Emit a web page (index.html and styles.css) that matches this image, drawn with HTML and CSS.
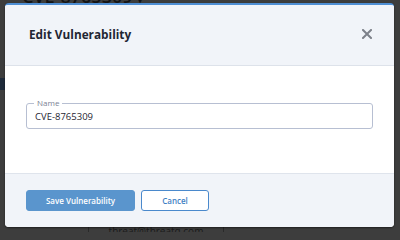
FILE: index.html
```html
<!DOCTYPE html>
<html>
<head>
<meta charset="utf-8">
<link rel="stylesheet" href="styles.css">
</head>
<body>
<div class="page">
  <div class="page-top">CVE-8765309 <span class="caret">▾</span></div>
  <div class="page-side">
    <div class="side-block"></div>
  </div>
  <div class="page-bottom">
    <span class="email">threat@threatq.com</span>
  </div>
</div>
<div class="modal">
  <div class="modal-header">
    <h2 class="modal-title">Edit Vulnerability</h2>
    <button class="close" aria-label="Close">
      <svg width="10" height="10" viewBox="0 0 10 10"><path d="M1 1L9 9M9 1L1 9" stroke="#7d818a" stroke-width="2" stroke-linecap="square"/></svg>
    </button>
  </div>
  <div class="modal-body">
    <div class="field">
      <span class="field-label">Name</span>
      <div class="field-value">CVE-8765309</div>
    </div>
  </div>
  <div class="modal-footer">
    <button class="btn btn-primary">Save Vulnerability</button>
    <button class="btn btn-outline">Cancel</button>
  </div>
</div>
</body>
</html>
```

FILE: styles.css
```css
html, body {
  margin: 0;
  padding: 0;
}
body {
  width: 400px;
  height: 232px;
  overflow: hidden;
  background: #3d3d3d;
  font-family: "Open Sans", "Noto Sans", sans-serif;
  position: relative;
}
.page {
  height: 232px;
  display: flex;
  flex-direction: column;
}
.page-top {
  margin-top: -11px;
  margin-left: 22px;
  font-size: 18px;
  font-weight: 600;
  color: #141414;
  line-height: 14px;
}
.caret {
  font-size: 12px;
}
.page-side {
  flex: 1;
}
.side-block {
  margin-top: 72px;
  width: 5px;
  height: 12px;
  background: #1e2a3a;
}
.page-bottom {
  height: 6px;
  margin-left: 88px;
  width: 134px;
  border-left: 1px solid #2a2a2a;
  border-right: 1px solid #2a2a2a;
  display: flex;
  justify-content: center;
}
.email {
  font-size: 10px;
  line-height: 8px;
  color: #1a1a1a;
  margin-top: 1px;
}
.modal {
  position: absolute;
  left: 5px;
  top: 3px;
  width: 389px;
  height: 224px;
  box-sizing: border-box;
  border-top: 2px solid #4f8fd4;
  border-radius: 4px;
  overflow: hidden;
  background: #fff;
  display: flex;
  flex-direction: column;
  box-shadow: 0 1px 2px rgba(0,0,0,0.5);
}
.modal-header {
  height: 61px;
  box-sizing: border-box;
  background: #f1f4f9;
  border-bottom: 1px solid #dde2ea;
  display: flex;
  align-items: center;
  justify-content: space-between;
  padding: 0 22px 0 24px;
}
.modal-title {
  margin: 0;
  font-size: 11.8px;
  font-weight: 700;
  color: #1f2633;
  padding-bottom: 2px;
}
.close {
  border: 0;
  background: none;
  padding: 0;
  width: 10px;
  height: 10px;
  display: flex;
  margin-bottom: 3px;
}
.modal-body {
  height: 107px;
  box-sizing: border-box;
  padding: 37px 21px 0 21px;
}
.field {
  position: relative;
  height: 26px;
  box-sizing: border-box;
  border: 1px solid #b7bfd2;
  border-radius: 3px;
  display: flex;
  align-items: center;
}
.field-label {
  position: absolute;
  left: 7px;
  top: -6px;
  font-size: 8px;
  line-height: 10px;
  color: #7a8294;
  padding: 0 3px;
  background: #fff;
}
.field-value {
  font-size: 9.5px;
  color: #1f2633;
  line-height: 12px;
  padding: 1px 0 0 8px;
}
.modal-footer {
  flex: 1;
  background: #f1f4f9;
  border-top: 1px solid #dfe4ec;
  display: flex;
  align-items: flex-start;
  gap: 6px;
  padding: 16px 21px 0 21px;
}
.btn {
  height: 21px;
  box-sizing: border-box;
  border-radius: 3px;
  font-family: "Open Sans", "Noto Sans", sans-serif;
  font-size: 8px;
  font-weight: 600;
  padding: 0;
  cursor: pointer;
}
.btn-primary {
  width: 109px;
  background: #5a95cd;
  border: 1px solid #5a95cd;
  color: #fff;
}
.btn-outline {
  width: 68px;
  background: #fff;
  border: 1px solid #4a89cc;
  color: #3f7fc4;
}
```
